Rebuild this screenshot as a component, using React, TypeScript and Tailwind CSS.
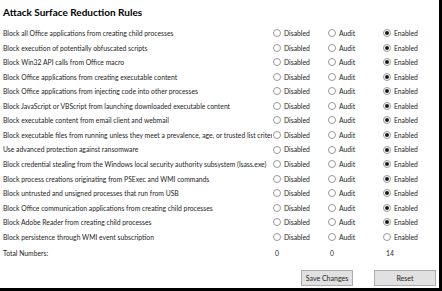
const rules = [
  { name: "Block all Office applications from creating child processes", value: "enabled" },
  { name: "Block execution of potentially obfuscated scripts", value: "enabled" },
  { name: "Block Win32 API calls from Office macro", value: "enabled" },
  { name: "Block Office applications from creating executable content", value: "enabled" },
  { name: "Block Office applications from injecting code into other processes", value: "enabled" },
  { name: "Block JavaScript or VBScript from launching downloaded executable content", value: "enabled" },
  { name: "Block executable content from email client and webmail", value: "enabled" },
  { name: "Block executable files from running unless they meet a prevalence, age, or trusted list criteria", value: "enabled" },
  { name: "Use advanced protection against ransomware", value: "enabled" },
  { name: "Block credential stealing from the Windows local security authority subsystem (lsass.exe)", value: "enabled" },
  { name: "Block process creations originating from PSExec and WMI commands", value: "enabled" },
  { name: "Block untrusted and unsigned processes that run from USB", value: "enabled" },
  { name: "Block Office communication applications from creating child processes", value: "enabled" },
  { name: "Block Adobe Reader from creating child processes", value: "enabled" },
  { name: "Block persistence through WMI event subscription", value: "" },
];

const options = [
  { key: "disabled", label: "Disabled" },
  { key: "audit", label: "Audit" },
  { key: "enabled", label: "Enabled" },
];

const Radio = ({ checked, label }: { checked: boolean; label: string }) => (
  <div className="flex items-center gap-[3px] pl-[1px]">
    <span className="flex h-[8px] w-[8px] items-center justify-center rounded-full border border-[#999999] bg-white">
      {checked && <span className="h-[4px] w-[4px] rounded-full bg-[#1a1a1a]" />}
    </span>
    <span>{label}</span>
  </div>
);

export default function App() {
  return (
    <div className="h-[291px] w-[442px] overflow-hidden border-b-[3px] border-r-[3px] border-black bg-white font-['Lato',sans-serif] text-[6.8px] text-[#1e1e1e]">
      <div className="h-[25.75px] pl-[3px] pt-[6px] text-[10px] font-bold leading-[13px] text-black">
        Attack Surface Reduction Rules
      </div>
      <div className="grid auto-rows-[14.57px] grid-cols-[272px_55px_55px_1fr] items-center">
        {rules.map((rule) => (
          <div key={rule.name} className="contents">
            <div className="overflow-hidden whitespace-nowrap pl-[3px]">{rule.name}</div>
            {options.map((o) => (
              <Radio key={o.key} checked={rule.value === o.key} label={o.label} />
            ))}
          </div>
        ))}
        <div className="mt-[4px] pl-[3px]">Total Numbers:</div>
        <div className="mt-[4px] pl-[3px]">0</div>
        <div className="mt-[4px] pl-[3px]">0</div>
        <div className="mt-[4px] pl-[4px]">14</div>
      </div>
      <div className="mt-[11px] flex justify-end gap-[21px] pr-[3px]">
        <button className="h-[16px] w-[52px] border border-[#adadad] bg-[#e1e1e1] text-[7px] text-[#1e1e1e]">
          Save Changes
        </button>
        <button className="h-[16px] w-[62px] border border-[#adadad] bg-[#e1e1e1] text-[7px] text-[#1e1e1e]">
          Reset
        </button>
      </div>
    </div>
  );
}
